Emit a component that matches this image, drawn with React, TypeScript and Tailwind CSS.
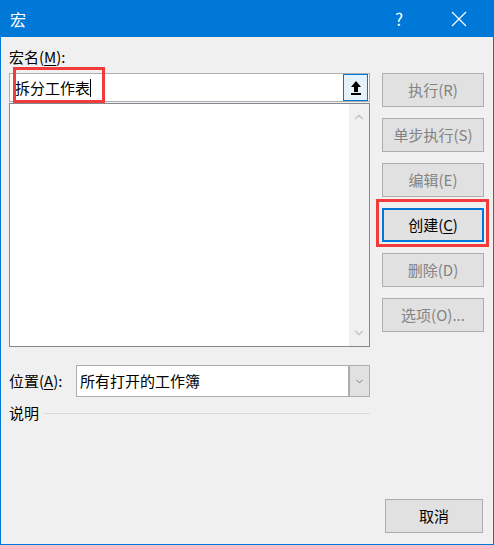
import { ChevronDown, ChevronUp } from "lucide-react";

const buttons = [
  { label: "执行(R)" },
  { label: "单步执行(S)" },
  { label: "编辑(E)" },
  { label: "创建", key: "C", active: true },
  { label: "删除(D)" },
  { label: "选项(O)..." },
];

const ArrowUpBar = () => (
  <svg width="12" height="16" viewBox="0 0 12 16">
    <path d="M6 1 L11 7 L8 7 L8 12 L4 12 L4 7 L1 7 Z" fill="#000" />
    <rect x="1" y="13" width="10" height="2" fill="#000" />
  </svg>
);

const MacroDialog = () => {
  return (
    <div className="w-[494px] h-[545px] flex flex-col bg-[#f0f0f0] border border-t-0 border-[#0078d7] font-['Noto_Sans_CJK_SC',sans-serif] text-[15px] text-black overflow-hidden">
      <div className="h-[37px] shrink-0 bg-[#0078d7] text-white flex items-center -mx-px px-[10px]">
        <span className="text-[16px]">宏</span>
        <span className="ml-auto text-[17px] w-[20px] text-center mr-[42px]">?</span>
        <svg width="16" height="16" viewBox="0 0 16 16" className="mr-[17px]">
          <path d="M1 1 L15 15 M15 1 L1 15" stroke="#fff" strokeWidth="1.2" />
        </svg>
      </div>

      <div className="flex flex-1 pl-[8px]">
        <div className="w-[361px] flex flex-col">
          <div className="h-[20px] mt-[10px] leading-[20px]">
            宏名(<span className="underline underline-offset-2">M</span>):
          </div>
          <div className="relative mt-[6px] h-[29px] bg-white border border-[#adadad] flex items-center">
            <span className="pl-[5px] leading-[20px]">拆分工作表</span>
            <span className="w-px h-[18px] bg-black" />
            <div className="ml-auto mr-px h-[27px] w-[25px] border border-[#0078d7] bg-[#e5f1fb] flex items-center justify-center">
              <ArrowUpBar />
            </div>
            <div className="absolute left-[3px] top-[-7px] w-[92px] h-[36px] border-[3px] border-[#f23b3b]" />
          </div>
          <div className="mt-px h-[244px] bg-white border border-[#828790] flex">
            <div className="flex-1" />
            <div className="w-[20px] bg-[#f0f0f0] flex flex-col items-center justify-between py-[6px]">
              <ChevronUp className="w-[14px] h-[14px] text-[#c2c2c2]" strokeWidth={2} />
              <ChevronDown className="w-[14px] h-[14px] text-[#c2c2c2]" strokeWidth={2} />
            </div>
          </div>
          <div className="mt-[18px] flex items-center h-[32px]">
            <span className="w-[67px]">
              位置(<span className="underline underline-offset-2">A</span>):
            </span>
            <div className="flex-1 h-[32px] bg-white border border-[#adadad] flex items-center">
              <span className="pl-[3px]">所有打开的工作簿</span>
              <div className="ml-auto h-[30px] w-[21px] bg-[#e1e1e1] border-l-2 border-[#adadad] flex items-center justify-center">
                <ChevronDown className="w-[11px] h-[11px] text-[#555]" strokeWidth={1.5} />
              </div>
            </div>
          </div>
          <div className="mt-[6px] flex items-center h-[20px]">
            <span>说明</span>
            <div className="flex-1 ml-[5px] h-px bg-[#dadada]" />
          </div>
        </div>

        <div className="flex flex-col flex-1">
          <div className="ml-[12px] mt-[36px] flex flex-col gap-[11px]">
            {buttons.map((b) =>
              b.active ? (
                <div key={b.label} className="relative w-[102px] h-[34px] border-2 border-[#0078d7] bg-[#e1e1e1] flex items-center justify-center">
                  <span>
                    {b.label}(<span className="underline underline-offset-2">{b.key}</span>)
                  </span>
                  <div className="absolute -left-[8px] -top-[11px] w-[113px] h-[48px] border-[3px] border-[#f23b3b]" />
                </div>
              ) : (
                <div key={b.label} className="w-[102px] h-[34px] border border-[#adadad] bg-[#e1e1e1] text-[#838383] flex items-center justify-center">
                  {b.label}
                </div>
              )
            )}
          </div>
          <div className="mt-auto mb-[11px] ml-[15px] w-[98px] h-[34px] border border-[#adadad] bg-[#e1e1e1] flex items-center justify-center">
            取消
          </div>
        </div>
      </div>
    </div>
  );
};

export default function App() {
  return <MacroDialog />;
}
